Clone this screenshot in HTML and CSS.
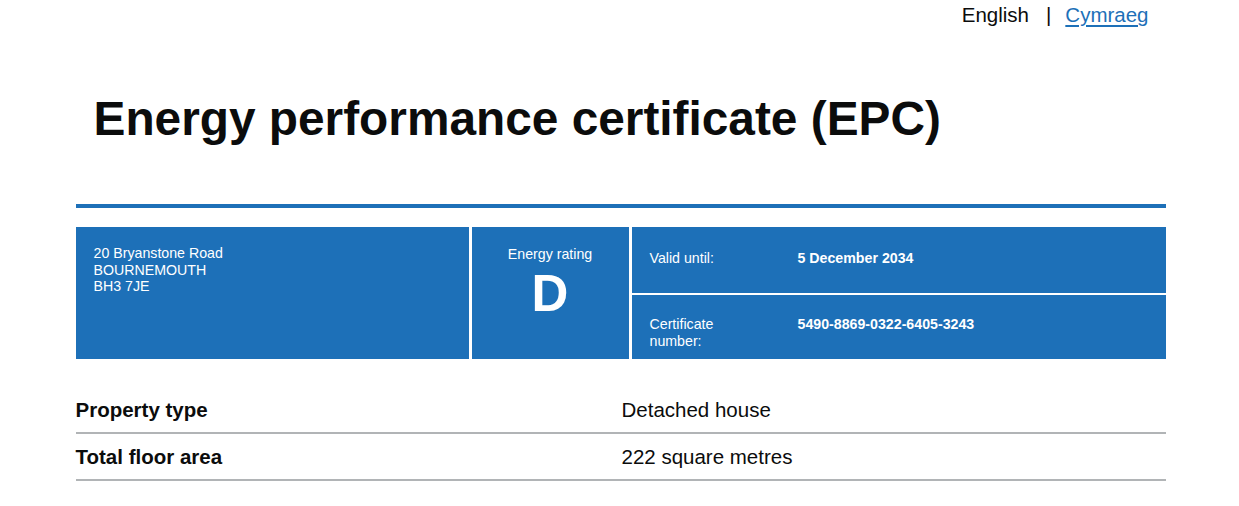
FILE: index.html
```html
<!DOCTYPE html>
<html lang="en">
<head>
<meta charset="UTF-8">
<meta name="viewport" content="width=device-width, initial-scale=1.0">
<title>Energy performance certificate (EPC)</title>
<link rel="stylesheet" href="styles.css">
</head>
<body>

<div class="page">
    <div class="language">
        <span class="lang-current">English</span>
        <span class="lang-sep">|</span>
        <a href="#" class="lang-link">Cymraeg</a>
    </div>

    <h1 class="title">Energy performance certificate (EPC)</h1>

    <div class="summary">
        <div class="address">
            20 Bryanstone Road<br>
            BOURNEMOUTH<br>
            BH3 7JE
        </div>
        <div class="rating">
            <span class="rating-label">Energy rating</span>
            <span class="rating-letter">D</span>
        </div>
        <div class="details">
            <div class="detail-row">
                <span class="detail-key">Valid until:</span>
                <span class="detail-value">5 December 2034</span>
            </div>
            <div class="detail-row">
                <span class="detail-key">Certificate number:</span>
                <span class="detail-value">5490-8869-0322-6405-3243</span>
            </div>
        </div>
    </div>

    <dl class="facts">
        <div class="fact">
            <dt>Property type</dt>
            <dd>Detached house</dd>
        </div>
        <div class="fact">
            <dt>Total floor area</dt>
            <dd>222 square metres</dd>
        </div>
    </dl>
</div>

</body>
</html>
```

FILE: styles.css
```css
body {
    margin: 0;
    font-family: "Liberation Sans", Arial, sans-serif;
    color: #0b0c0c;
    background: #fff;
}
.page {
    width: 1090px;
    margin: 0 auto;
    padding-left: 2px;
}
.language {
    display: flex;
    justify-content: flex-end;
    align-items: center;
    padding: 3px 17px 0 0;
    font-size: 20.5px;
    line-height: 24px;
}
.lang-sep {
    margin: 0 14px 0 17px;
}
.lang-link {
    color: #1d70b8;
    text-decoration: underline;
    text-underline-offset: 3px;
}
.title {
    margin: 0;
    padding: 64px 0 0 18px;
    font-size: 47.8px;
    line-height: 56px;
    font-weight: bold;
}
.summary {
    display: flex;
    gap: 3px;
    margin-top: 57px;
    border-top: 4px solid #1d70b8;
    padding-top: 19px;
    height: 132px;
    color: #fff;
    font-size: 14.2px;
}
.address {
    width: 357px;
    padding: 18px 18px 0;
    background: #1d70b8;
    line-height: 16.5px;
}
.rating {
    width: 157px;
    display: flex;
    flex-direction: column;
    align-items: center;
    padding-top: 19px;
    background: #1d70b8;
}
.rating-label {
    line-height: 16px;
}
.rating-letter {
    margin-top: 4px;
    font-size: 51px;
    line-height: 56px;
    font-weight: bold;
}
.details {
    flex: 1;
    display: flex;
    flex-direction: column;
    gap: 2px;
}
.detail-row {
    flex: 1;
    display: flex;
    background: #1d70b8;
    padding: 23px 18px 0;
    line-height: 17px;
}
.detail-row + .detail-row {
    padding-top: 21px;
}
.detail-key {
    width: 100px;
    margin-right: 48px;
}
.detail-value {
    font-weight: bold;
}
.facts {
    margin: 28px 0 0;
    font-size: 20.5px;
}
.fact {
    display: flex;
    border-bottom: 2px solid #b1b4b6;
    padding: 10px 0;
    line-height: 25px;
}
.fact dt {
    width: 546px;
    font-weight: bold;
}
.fact dd {
    margin: 0;
}
```
